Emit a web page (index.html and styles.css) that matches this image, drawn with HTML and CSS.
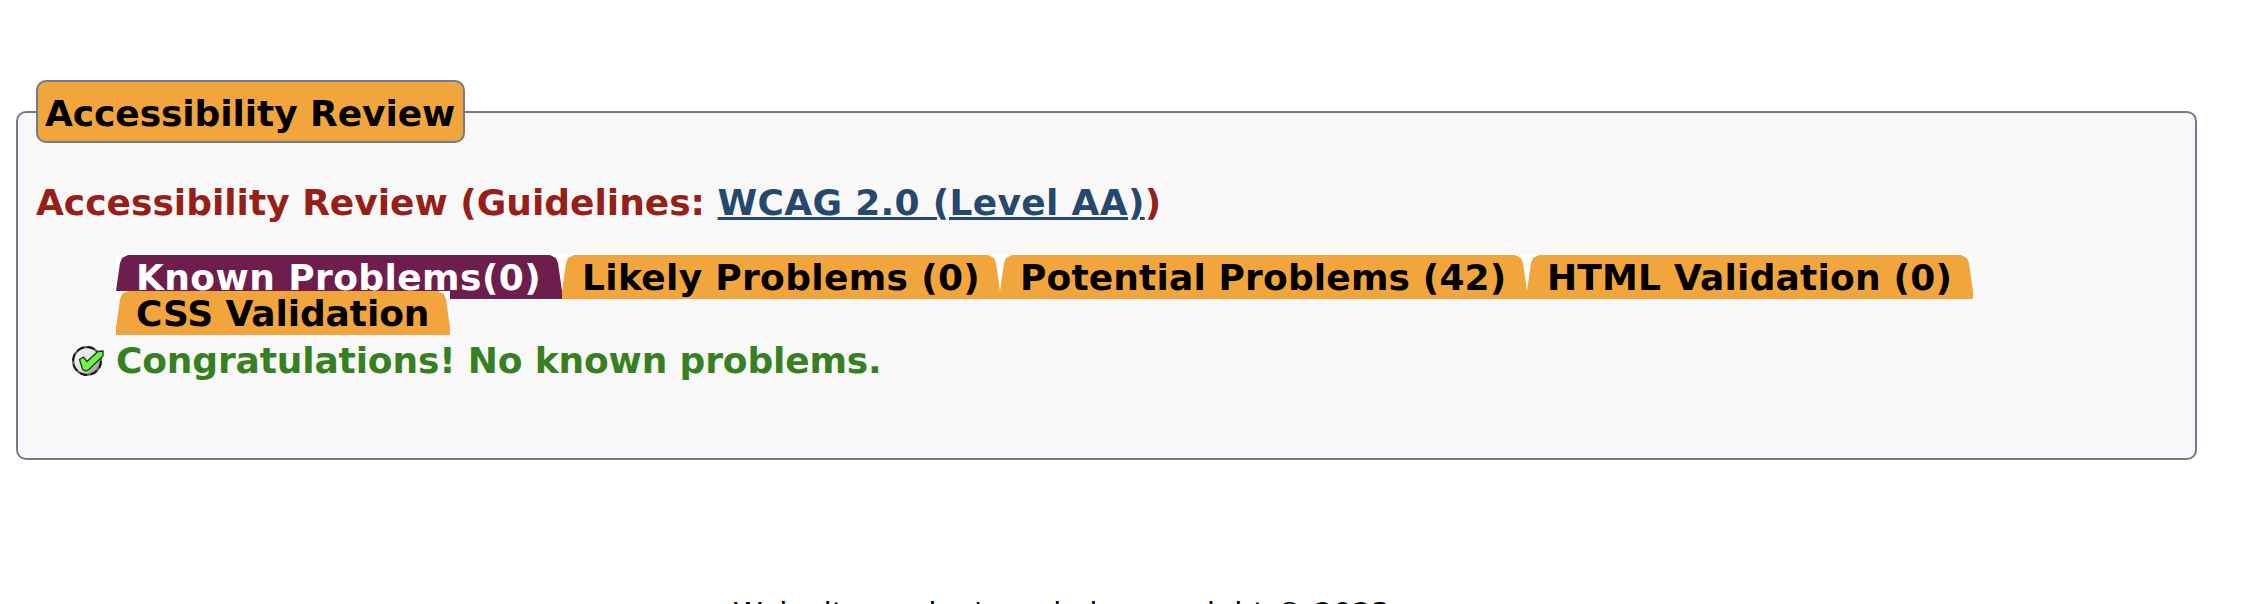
FILE: index.html
```html
<!DOCTYPE html>
<html lang="en"><head><meta charset="utf-8"><title>Accessibility Review</title><link rel="stylesheet" href="styles.css"></head>
<body>
<fieldset class="review">
<legend class="legend">Accessibility Review</legend>
<h2 class="heading">Accessibility Review (Guidelines: <a href="#">WCAG 2.0 (Level AA)</a>)</h2>
<ul class="tabs">
<li class="tab known active">Known Problems(0)</li>
<li class="tab likely">Likely Problems (0)</li>
<li class="tab potential">Potential Problems (42)</li>
<li class="tab html">HTML Validation (0)</li>
<li class="tab css">CSS Validation</li>
</ul>
<p class="result"><svg class="check" viewBox="0 0 32 30"><defs><linearGradient id="g" x1="0" y1="0" x2="1" y2="1"><stop offset="0" stop-color="#fff"/><stop offset=".55" stop-color="#dedede"/><stop offset="1" stop-color="#777"/></linearGradient></defs><circle cx="15" cy="15" r="13.8" fill="url(#g)" stroke="#555" stroke-width="2.2"/><circle cx="15" cy="15" r="14" fill="none" stroke="#111" stroke-width="1.800" stroke-dasharray="7 4"/><path d="M7.500 13.500l4-2.500 3.500 4.500L26 5.500l5-.5v5L17 23.500l-3.500 1.500-3-2z" fill="#6cf545" stroke="#173b0c" stroke-width="1.300"/></svg>Congratulations! No known problems.</p>
</fieldset>
<footer class="footer">Web site engine's code is copyright © 2023</footer>
</body></html>
```
FILE: styles.css
```css
body{margin:0;padding-top:80px;background:#fff;height:604px;box-sizing:border-box;overflow:hidden;font-family:Verdana,"DejaVu Sans",sans-serif;font-size:36px;line-height:44px}
.review{box-sizing:border-box;width:2181px;height:380px;margin:0 0 0 16px;padding:0 18px;border:2px solid #6f7b8d;border-radius:10px;background:#f8f8f8;font-weight:bold}
.legend{box-sizing:border-box;width:429px;height:63px;padding:10px 7px 8px;border:2px solid #6f7b8d;border-radius:10px;background:#f2a53d;white-space:nowrap;letter-spacing:-.08px}
.heading{margin:38px 0 0;font-size:36px;color:#962017;white-space:pre}
.heading a{color:#26486f;text-decoration-thickness:3px;letter-spacing:.32px}
.tabs{display:flex;flex-wrap:wrap;list-style:none;margin:30px 0 0 80px;padding:0;width:1900px}
.tab{position:relative;height:36px;line-height:46px;white-space:nowrap;padding-left:20px;box-sizing:border-box;color:#000;background:#fff;z-index:0}
.tab::before{content:"";position:absolute;inset:0 0 -8px;background:#f2a53d;z-index:-1;clip-path:polygon(0 36px,4px 8px,6px 3px,12px 0,calc(100% - 12px) 0,calc(100% - 6px) 3px,calc(100% - 4px) 8px,100% 36px,100% 100%,0 100%)}
.active{color:#fff}
.active::before{background:#6e1e4c}
.known{width:446px;letter-spacing:.42px}
.likely{width:438px;letter-spacing:.33px}
.potential{width:527px;letter-spacing:.15px}
.html{width:446px;letter-spacing:.2px}
.css{width:334px;letter-spacing:-.1px}
.result{display:flex;margin:12px 0 0 36px;color:#378021;align-items:center;letter-spacing:-.15px}
.check{width:32px;height:30px;margin-right:12px}
.footer{margin-top:132px;padding-left:733px;font-size:30px;white-space:nowrap}
```
